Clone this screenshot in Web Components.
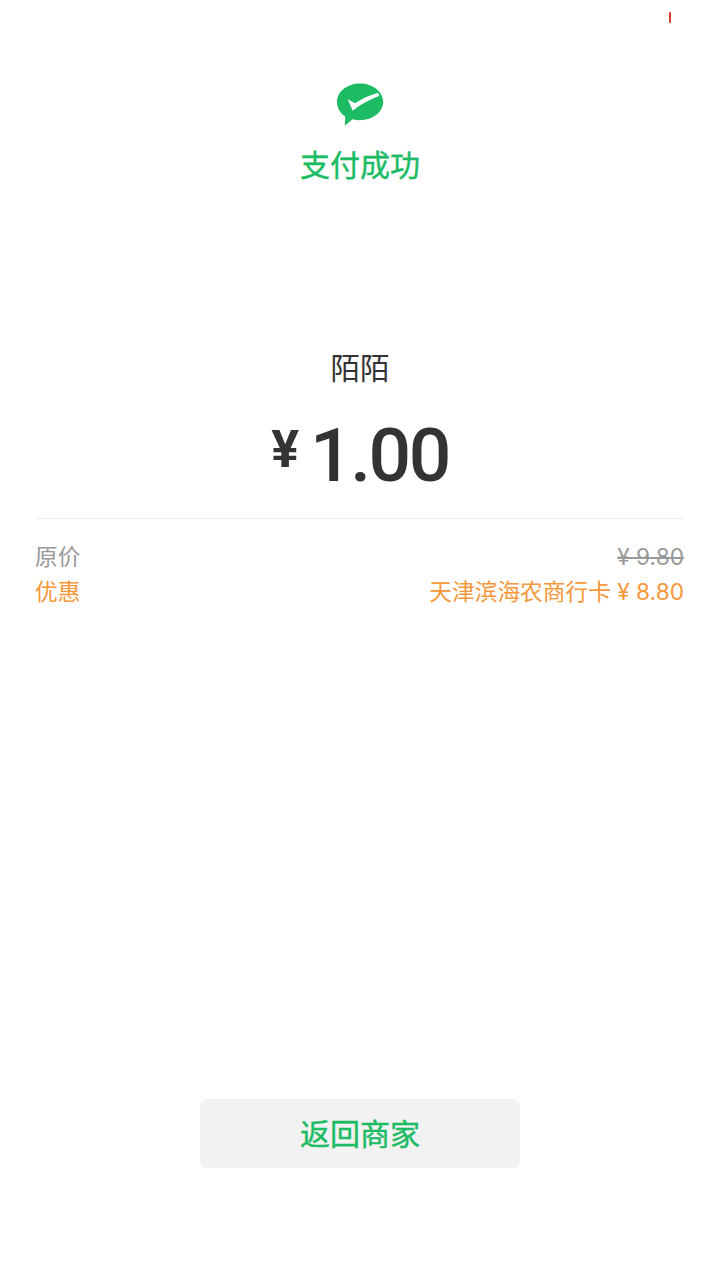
<!DOCTYPE html>
<html lang="zh-CN"><head><meta charset="utf-8"><title>支付成功</title>
<style>
html,body{margin:0;padding:0;background:#fff}
body{font-family:"Noto Sans CJK SC","Noto Sans",sans-serif}
</style></head><body>
<pay-page>
  <pay-status slot="status">支付成功</pay-status>
  <pay-amount slot="amount" merchant="陌陌" yen="¥" value="1.00"></pay-amount>
  <pay-row slot="rows" label="原价" value="¥ 9.80" kind="strike"></pay-row>
  <pay-row slot="rows" label="优惠" value="天津滨海农商行卡 ¥ 8.80" kind="promo"></pay-row>
  <pay-button slot="action">返回商家</pay-button>
</pay-page>
<script>
class PayPage extends HTMLElement{constructor(){super();this.attachShadow({mode:'open'}).innerHTML=`<style>
:host{display:flex;flex-direction:column;width:720px;height:1280px;position:relative;box-sizing:border-box;padding-top:83px;background:#fff;overflow:hidden}
.mark{position:absolute;left:669px;top:12px;width:2px;height:11px;background:#d9382c;border-radius:1px}
.rows{display:flex;flex-direction:column;margin:20px 36px 0 35px}
.spacer{flex:1}
.action{display:flex;justify-content:center;padding-bottom:112px}
</style><div class="mark"></div><slot name="status"></slot><slot name="amount"></slot><div class="rows"><slot name="rows"></slot></div><div class="spacer"></div><div class="action"><slot name="action"></slot></div>`}}
class PayStatus extends HTMLElement{constructor(){super();this.attachShadow({mode:'open'}).innerHTML=`<style>
:host{display:flex;flex-direction:column;align-items:center}
svg{display:block;width:48px;height:44px}
.t{font:400 30px/44px "Noto Sans CJK SC",sans-serif;-webkit-text-stroke:.4px #1cbb64;margin-top:14px;color:#1cbb64}
</style><svg viewBox="0 0 48 44"><path fill="#1dbb64" d="M24 .4C36.800 .4 47.200 8.600 47.200 18.800S36.800 37.200 24 37.200c-2.700 0-5.100-.3-7.500-1L8.800 42.800 9.300 33.600C4.200 30.300 1 24.900 1 18.800 1 8.600 11.200 .4 24 .4z"/><path fill="#fff" d="M11.700 16.300 19 20.300C26 15.500 34 12 42.300 9.700L43.300 13C34 16.500 25 21 16.700 27.700z"/></svg><div class="t"><slot></slot></div>`}}
class PayAmount extends HTMLElement{connectedCallback(){if(this.shadowRoot)return;this.attachShadow({mode:'open'}).innerHTML=`<style>
:host{display:flex;flex-direction:column;align-items:center;color:#333;padding-bottom:18px;border-bottom:1px solid #ededed;margin:162px 35px 0}
.m{font:400 29.6px/40px "Noto Sans CJK SC",sans-serif}
.a{display:flex;align-items:flex-start;height:90px;margin-top:23px;font-family:Roboto,"Noto Sans CJK SC",sans-serif;font-weight:500;white-space:nowrap}
.y{font-size:52px;line-height:80px;font-weight:700;margin-right:11px}
.v{font-size:75px;line-height:90px;letter-spacing:-2.500px}
</style><div class="m">${this.getAttribute('merchant')}</div><div class="a"><span class="y">${this.getAttribute('yen')}</span><span class="v">${this.getAttribute('value')}</span></div>`}}
class PayRow extends HTMLElement{connectedCallback(){if(this.shadowRoot)return;const k=this.getAttribute('kind');this.attachShadow({mode:'open'}).innerHTML=`<style>
:host{display:flex;justify-content:space-between;height:35px;align-items:center;font:400 22.700px/35px Inter,"Noto Sans CJK SC",sans-serif;color:${k==='promo'?'#f5973a':'#999'}}
.v{${k==='strike'?'text-decoration:line-through;':''}}
</style><span>${this.getAttribute('label')}</span><span class="v">${this.getAttribute('value')}</span>`}}
class PayButton extends HTMLElement{constructor(){super();this.attachShadow({mode:'open'}).innerHTML=`<style>
:host{display:flex;align-items:center;justify-content:center;box-sizing:border-box;width:320px;height:69px;padding-bottom:3px;border-radius:8px;background:#f2f2f2;color:#1cbb64;-webkit-text-stroke:.4px #1cbb64;font:400 30px/44px "Noto Sans CJK SC",sans-serif}
</style><slot></slot>`}}
customElements.define('pay-page',PayPage);
customElements.define('pay-status',PayStatus);
customElements.define('pay-amount',PayAmount);
customElements.define('pay-row',PayRow);
customElements.define('pay-button',PayButton);
</script>
</body></html>
